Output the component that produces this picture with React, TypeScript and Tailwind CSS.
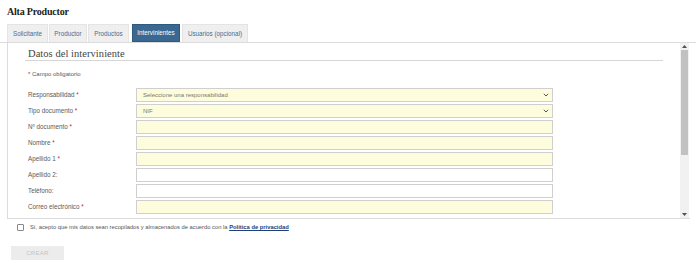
import React from "react";

const labelFont = { fontFamily: '"Liberation Sans", Arial, sans-serif' };

type Row = { label: string; req: boolean; kind: "select" | "input"; value?: string; yellow: boolean };

const rows: Row[] = [
  { label: "Responsabilidad", req: true, kind: "select", value: "Seleccione una responsabilidad", yellow: true },
  { label: "Tipo documento", req: true, kind: "select", value: "NIF", yellow: true },
  { label: "Nº documento", req: true, kind: "input", yellow: true },
  { label: "Nombre", req: true, kind: "input", yellow: true },
  { label: "Apellido 1", req: true, kind: "input", yellow: true },
  { label: "Apellido 2:", req: false, kind: "input", yellow: false },
  { label: "Teléfono:", req: false, kind: "input", yellow: false },
  { label: "Correo electrónico", req: true, kind: "input", yellow: true },
];

const tabs = [
  { t: "Solicitante", w: 41 },
  { t: "Productor", w: 38 },
  { t: "Productos", w: 41 },
  { t: "Intervinientes", w: 48, active: true },
  { t: "Usuarios (opcional)", w: 66 },
];

export default function App() {
  return (
    <div className="w-[696px] h-[263px] bg-white overflow-hidden" style={labelFont}>
      <div className="h-[24px] pl-[7px] pt-[5px]">
        <div
          className="text-[10px] leading-[13px] font-bold text-[#222]"
          style={{ fontFamily: '"Liberation Serif", "Times New Roman", serif', letterSpacing: "-0.2px" }}
        >
          Alta Productor
        </div>
      </div>
      <div className="flex items-end h-[19px] pl-[7px] border-b border-[#dcdcdc] gap-[1px]">
        {tabs.map((tab, i) => (
          <div
            key={tab.t}
            className={
              tab.active
                ? "h-[18px] flex items-center justify-center bg-[#3a6891] text-white text-[6.3px] border border-[#2f5a80]"
                : "h-[18px] flex items-center justify-center bg-[#efefef] text-[#4a6d92] text-[6.3px] border border-[#e4e4e4] border-b-0"
            }
            style={{ width: tab.w, marginLeft: i === 3 ? 2 : i === 4 ? 1 : 0 }}
          >
            {tab.t}
          </div>
        ))}
      </div>
      <div className="ml-[7px] w-[683px] h-[176px] border-l border-b border-[#dcdcdc] flex">
        <div className="flex-1 pl-[17px] pr-[17px] overflow-hidden">
          <div className="pt-[4px] pl-[3px] h-[18px] border-b border-[#d6d6d6]">
            <div
              className="text-[10.5px] leading-[13px] text-[#444]"
              style={{ fontFamily: '"Liberation Serif", "Times New Roman", serif', letterSpacing: "0.05px" }}
            >
              Datos del interviniente
            </div>
          </div>
          <div className="pl-[3px] mt-[9px] text-[6px] leading-[8px] text-[#5a5a5a]">
            <span className="text-[#cc2222]">*</span> Campo obligatorio
          </div>
          <div className="mt-[10px] flex flex-col gap-[2px]">
            {rows.map((r) => (
              <div key={r.label} className="flex items-center h-[14px]">
                <div className="w-[111px] pl-[3px] text-[6.3px] text-[#5a5a5a]">
                  {r.label}
                  {r.req && <span className="text-[#cc2222]"> *</span>}
                </div>
                <div
                  className={
                    "w-[417px] h-[14px] border border-[#cfcfcf] flex items-center justify-between pl-[6px] pr-[3px] text-[6px] text-[#7a7a6a] " +
                    (r.yellow ? "bg-[#fdfcdc]" : "bg-white")
                  }
                >
                  <span>{r.value ?? ""}</span>
                  {r.kind === "select" && (
                    <svg width="6" height="4" viewBox="0 0 6 4">
                      <path d="M0.8 0.8 L3 3 L5.2 0.8" stroke="#555" strokeWidth="1" fill="none" />
                    </svg>
                  )}
                </div>
              </div>
            ))}
          </div>
        </div>
        <div className="w-[9px] mr-[1px] bg-[#f1f1f1] flex flex-col items-center">
          <div className="h-[7px] flex items-center justify-center">
            <svg width="5" height="3" viewBox="0 0 5 3">
              <path d="M0 3 L2.5 0 L5 3 Z" fill="#505050" />
            </svg>
          </div>
          <div className="w-[7px] h-[105px] bg-[#c1c1c1]" />
          <div className="flex-1" />
          <div className="h-[7px] flex items-center justify-center">
            <svg width="5" height="3" viewBox="0 0 5 3">
              <path d="M0 0 L2.5 3 L5 0 Z" fill="#505050" />
            </svg>
          </div>
        </div>
      </div>
      <div className="flex items-center h-[17px] pl-[17px]">
        <div className="w-[7px] h-[7px] border border-[#888] rounded-[1px] bg-white" />
        <div className="ml-[6px] text-[5.8px] text-[#555]">
          Sí, acepto que mis datos sean recopilados y almacenados de acuerdo con la{" "}
          <span className="text-[#1d3f7a] font-bold underline">Política de privacidad</span>
        </div>
      </div>
      <div className="pl-[11px] mt-[10px]">
        <div className="w-[53px] h-[14px] bg-[#ececec] flex items-center justify-center text-[6px] text-[#c4c4c4] tracking-[0.3px]">
          CREAR
        </div>
      </div>
    </div>
  );
}
